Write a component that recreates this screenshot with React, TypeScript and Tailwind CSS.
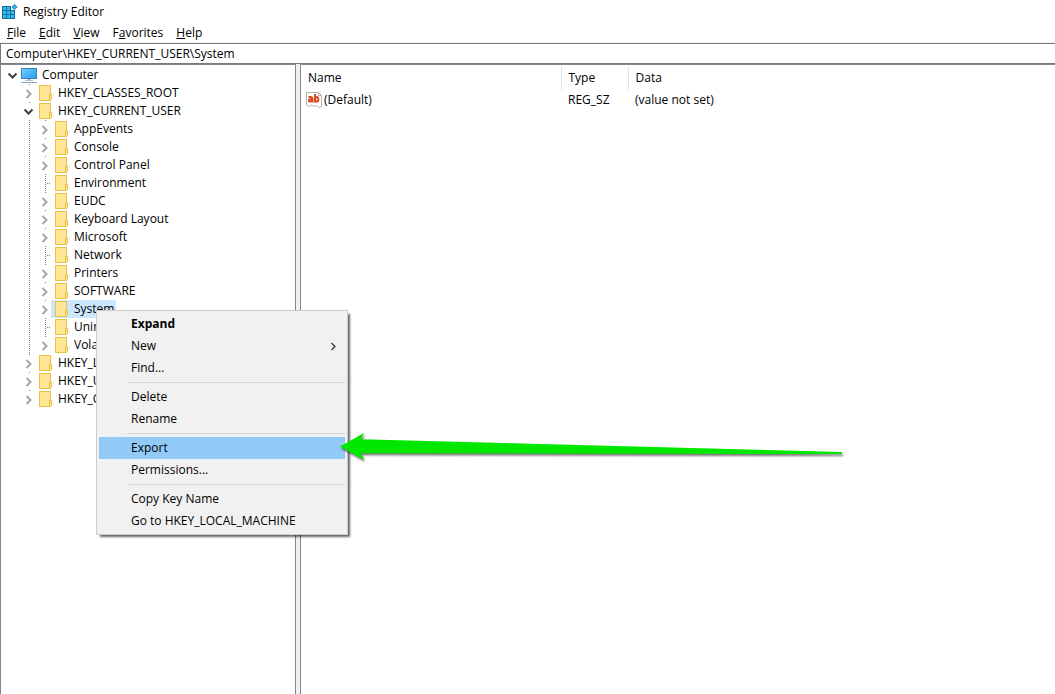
import React, { useState } from 'react';
import clsx from 'clsx';

type TreeNode = {
  name: string;
  level: number;
  state: 'open' | 'closed' | 'leaf';
  icon?: 'computer' | 'folder';
};

const nodes: TreeNode[] = [
  { name: 'Computer', level: 0, state: 'open', icon: 'computer' },
  { name: 'HKEY_CLASSES_ROOT', level: 1, state: 'closed' },
  { name: 'HKEY_CURRENT_USER', level: 1, state: 'open' },
  { name: 'AppEvents', level: 2, state: 'closed' },
  { name: 'Console', level: 2, state: 'closed' },
  { name: 'Control Panel', level: 2, state: 'closed' },
  { name: 'Environment', level: 2, state: 'leaf' },
  { name: 'EUDC', level: 2, state: 'closed' },
  { name: 'Keyboard Layout', level: 2, state: 'closed' },
  { name: 'Microsoft', level: 2, state: 'closed' },
  { name: 'Network', level: 2, state: 'leaf' },
  { name: 'Printers', level: 2, state: 'closed' },
  { name: 'SOFTWARE', level: 2, state: 'closed' },
  { name: 'System', level: 2, state: 'closed' },
  { name: 'Uninstall', level: 2, state: 'leaf' },
  { name: 'Volatile Environment', level: 2, state: 'closed' },
  { name: 'HKEY_LOCAL_MACHINE', level: 1, state: 'closed' },
  { name: 'HKEY_USERS', level: 1, state: 'closed' },
  { name: 'HKEY_CURRENT_CONFIG', level: 1, state: 'closed' },
];

const menus = [
  { key: 'F', before: '', after: 'ile' },
  { key: 'E', before: '', after: 'dit' },
  { key: 'V', before: '', after: 'iew' },
  { key: 'a', before: 'F', after: 'vorites' },
  { key: 'H', before: '', after: 'elp' },
];

const contextGroups = [
  ['Expand', 'New', 'Find...'],
  ['Delete', 'Rename'],
  ['Export', 'Permissions...'],
  ['Copy Key Name', 'Go to HKEY_LOCAL_MACHINE'],
];

export default function App() {
  const [selected, setSelected] = useState('System');

  return (
    <div className="relative flex min-h-screen flex-col overflow-hidden bg-white font-['Open_Sans','Noto_Sans',sans-serif] text-xs text-black">
      <header className="flex h-6 items-center gap-[5px] pl-0.5">
        <RegistryIcon />
        <h1>Registry Editor</h1>
      </header>

      <nav className="flex h-[18px] items-center gap-[13px] pl-[7px]">
        {menus.map((menu) => (
          <button key={menu.key}>
            {menu.before}
            <span className="underline">{menu.key}</span>
            {menu.after}
          </button>
        ))}
      </nav>

      <div className="border-t border-[#f0f0f0]">
        <input
          aria-label="Address"
          defaultValue="Computer\HKEY_CURRENT_USER\System"
          className="block h-[21px] w-full border border-r-0 border-[#7a7a7a] px-[5px] outline-none"
        />
      </div>

      <main className="flex grow gap-1 bg-[#f0f0f0]">
        <div
          role="tree"
          aria-label="Registry keys"
          className="w-[296px] shrink-0 border border-b-0 border-[#828790] bg-white pt-px pl-1"
        >
          {nodes.map((node) => (
            <TreeRow
              key={node.name}
              node={node}
              selected={node.name === selected}
              onSelect={() => setSelected(node.name)}
            />
          ))}
        </div>
        <div className="grow border-t border-l border-[#828790] bg-white pt-px">
          <ValueTable />
        </div>
      </main>

      <ContextMenu />
      <PointerArrow />
    </div>
  );
}

function TreeRow({
  node,
  selected,
  onSelect,
}: {
  node: TreeNode;
  selected: boolean;
  onSelect: () => void;
}) {
  return (
    <div
      role="treeitem"
      aria-level={node.level + 1}
      aria-selected={selected}
      className="flex h-[18px]"
    >
      {node.level > 0 && <span className="w-4" />}
      {node.level > 1 && (
        <span className="w-4 pl-2">
          <Dots />
        </span>
      )}
      {node.state === 'leaf' ? (
        <span className="flex w-[14px] items-center pl-2">
          <Dots />
          <span className="ml-px h-px grow bg-[repeating-linear-gradient(to_right,#808080_0_1px,transparent_1px_2px)]" />
        </span>
      ) : (
        <button
          aria-label={`Toggle ${node.name}`}
          className={clsx(
            'flex w-[14px] items-center',
            node.level > 0 &&
              'bg-[linear-gradient(#808080,#808080)] bg-[length:1px_1px] bg-[position:8px_0] bg-no-repeat'
          )}
        >
          <Chevron open={node.state === 'open'} />
        </button>
      )}
      <button
        onClick={onSelect}
        className={clsx(
          'flex items-center gap-[5px] pr-0.5 pl-0.5 whitespace-nowrap',
          selected && 'bg-[#cce8ff]'
        )}
      >
        {node.icon === 'computer' ? <ComputerIcon /> : <FolderIcon />}
        <span>{node.name}</span>
      </button>
    </div>
  );
}

function Dots() {
  return (
    <span className="block h-full w-px bg-[repeating-linear-gradient(to_bottom,#808080_0_1px,transparent_1px_2px)]" />
  );
}

function ValueTable() {
  return (
    <table className="w-full table-fixed text-left">
      <thead>
        <tr className="h-6">
          <th className="w-[260px] border-r border-[#e5e5e5] pl-[7px] font-normal">Name</th>
          <th className="w-[67px] border-r border-[#e5e5e5] pl-[7px] font-normal">Type</th>
          <th className="pl-[7px] font-normal">Data</th>
        </tr>
      </thead>
      <tbody>
        <tr className="h-5">
          <td className="pl-[5px]">
            <span className="flex items-center gap-0.5">
              <StringIcon />
              (Default)
            </span>
          </td>
          <td className="pl-[7px]">REG_SZ</td>
          <td className="pl-[7px]">(value not set)</td>
        </tr>
      </tbody>
    </table>
  );
}

function ContextMenu() {
  return (
    <div
      role="menu"
      className="absolute top-[310px] left-[96px] w-[252px] border border-[#cccccc] bg-[#f1f1f1] p-0.5 shadow-[3px_3px_2px_-1px_rgba(0,0,0,0.6)]"
    >
      {contextGroups.map((group, index) => (
        <div key={group[0]}>
          {index > 0 && <div className="my-[3px] ml-7 h-px bg-[#d7d7d7]" />}
          {group.map((item) => (
            <button
              key={item}
              role="menuitem"
              className={clsx(
                'flex h-[22px] w-full items-center justify-between pr-2 pl-8',
                item === 'Expand' && 'font-bold',
                item === 'Export' && 'bg-[#91c9f7]'
              )}
            >
              {item}
              {item === 'New' && (
                <svg width="7" height="9" viewBox="0 0 7 9" fill="none" stroke="#333" strokeWidth="1.2">
                  <path d="M1.5 1 L5 4.5 L1.5 8" />
                </svg>
              )}
            </button>
          ))}
        </div>
      ))}
    </div>
  );
}

function PointerArrow() {
  return (
    <svg
      width="510"
      height="36"
      viewBox="0 0 510 36"
      className="pointer-events-none absolute top-[430px] left-[338px] drop-shadow-[1px_2px_1px_rgba(0,0,0,0.55)]"
    >
      <path
        d="M2 16.5 L26 3 L23 9.3 L504 22 L504 24 L23 23.3 L26 30 Z"
        fill="#00e800"
      />
    </svg>
  );
}

function Chevron({ open }: { open: boolean }) {
  return open ? (
    <svg width="14" height="16" viewBox="0 0 14 16" fill="none" stroke="#404040" strokeWidth="2">
      <path d="M3.5 6.5 L7.5 10.5 L11.5 6.5" />
    </svg>
  ) : (
    <svg width="14" height="16" viewBox="0 0 14 16" fill="none" stroke="#a6a6a6" strokeWidth="2">
      <path d="M5.5 5 L9.5 9 L5.5 13" />
    </svg>
  );
}

function FolderIcon() {
  return (
    <svg width="16" height="18" viewBox="0 0 16 18">
      <rect x="2.5" y="1.5" width="11" height="15" fill="#ffe596" stroke="#e8c244" />
      <path d="M12.5 16.5 V10.5 H14.5 V15.5 L13.5 16.5 Z" fill="#ffe08a" stroke="#e8c244" />
    </svg>
  );
}

function ComputerIcon() {
  return (
    <svg width="16" height="18" viewBox="0 0 16 18">
      <defs>
        <linearGradient id="screen" x1="0" y1="0" x2="1" y2="1">
          <stop offset="0" stopColor="#7ad0ff" />
          <stop offset="1" stopColor="#1f9ef0" />
        </linearGradient>
      </defs>
      <rect x="0.5" y="2.5" width="15" height="10" fill="url(#screen)" stroke="#3b83b5" />
      <path d="M7 13 H9 V14 H7 Z" fill="#7f97a8" />
      <path d="M4 14.5 H12" stroke="#b4c3cd" />
      <path d="M0 16.5 H16" stroke="#8fa6b5" />
    </svg>
  );
}

function StringIcon() {
  return (
    <svg width="16" height="16" viewBox="0 0 16 16">
      <path
        d="M0.5 0.5 H12.5 L15.5 3.5 V14.5 L13 15.5 L10.5 13.5 L8 14.5 L5.5 13 L3 14.5 L0.5 13 Z"
        fill="#fff"
        stroke="#b4b4b4"
      />
      <path d="M12.5 0.5 V3.5 H15.5" fill="none" stroke="#b4b4b4" />
      <g fill="none" stroke="#d9481c" strokeWidth="2">
        <path d="M2.5 5 H5 Q6.4 5 6.4 6.5 V10.5 M6.4 7.3 H4.2 Q2.8 7.4 2.8 8.5 Q2.8 9.6 4 9.6 Q5.5 9.6 6.4 8.6" />
        <path d="M9 2 V10.5 M9 6.3 Q9.6 5 10.8 5 Q12.3 5.1 12.3 7.3 Q12.3 9.6 10.7 9.6 Q9.5 9.6 9 8.6" />
      </g>
    </svg>
  );
}

function RegistryIcon() {
  return (
    <svg width="16" height="16" viewBox="0 0 16 16">
      <path d="M0 2 H9 V6 H13 V15 H0 Z" fill="#0b6fa4" />
      <g fill="#35b8ea">
        <rect x="1" y="3" width="3" height="3" />
        <rect x="5" y="3" width="3" height="3" />
        <rect x="1" y="7" width="3" height="3" />
        <rect x="5" y="7" width="3" height="3" />
        <rect x="9" y="7" width="3" height="3" />
        <rect x="1" y="11" width="3" height="3" />
        <rect x="5" y="11" width="3" height="3" />
        <rect x="9" y="11" width="3" height="3" />
      </g>
      <path d="M12.5 0 L15.5 3 L12.5 6 L9.5 3 Z" fill="#1687c0" />
      <path d="M12.5 1.5 L14 3 L12.5 4.5 L11 3 Z" fill="#4cc4f0" />
    </svg>
  );
}
